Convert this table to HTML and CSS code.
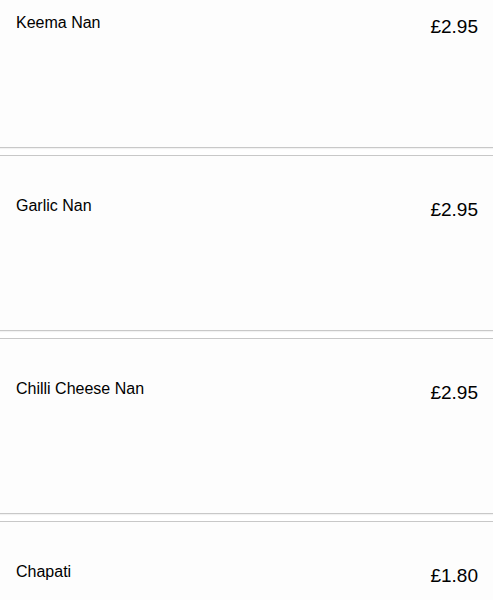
FILE: index.html
```html
<!DOCTYPE html>
<html lang="en">
<head>
<meta charset="utf-8">
<title>Breads</title>
<link rel="stylesheet" href="styles.css">
</head>
<body>
<div class="list">
  <div class="card">
    <div class="row"><span class="name">Keema Nan</span><span class="price">£2.95</span></div>
  </div>
  <div class="card">
    <div class="row"><span class="name">Garlic Nan</span><span class="price">£2.95</span></div>
  </div>
  <div class="card">
    <div class="row"><span class="name">Chilli Cheese Nan</span><span class="price">£2.95</span></div>
  </div>
  <div class="card">
    <div class="row"><span class="name">Chapati</span><span class="price">£1.80</span></div>
  </div>
</div>
</body>
</html>
```
FILE: styles.css
```css
html, body {
  margin: 0;
  padding: 0;
  background: #ffffff;
  overflow: hidden;
}
body {
  font-family: "Liberation Sans", Arial, sans-serif;
  color: #000000;
}
.list {
  margin-top: -28px;
  display: flex;
  flex-direction: column;
  gap: 7px;
}
.card {
  height: 174px;
  background: #fdfdfd;
  border-top: 1px solid #c8c8c8;
  border-bottom: 1px solid #c8c8c8;
  box-shadow: 0 1px 1px rgba(0,0,0,0.05);
}
.row {
  display: flex;
  justify-content: space-between;
  align-items: flex-start;
  padding: 41px 15px 0 16px;
}
.name {
  font-size: 16px;
  line-height: 18px;
}
.price {
  font-size: 19px;
  line-height: 22px;
  margin-top: 2px;
}
```
